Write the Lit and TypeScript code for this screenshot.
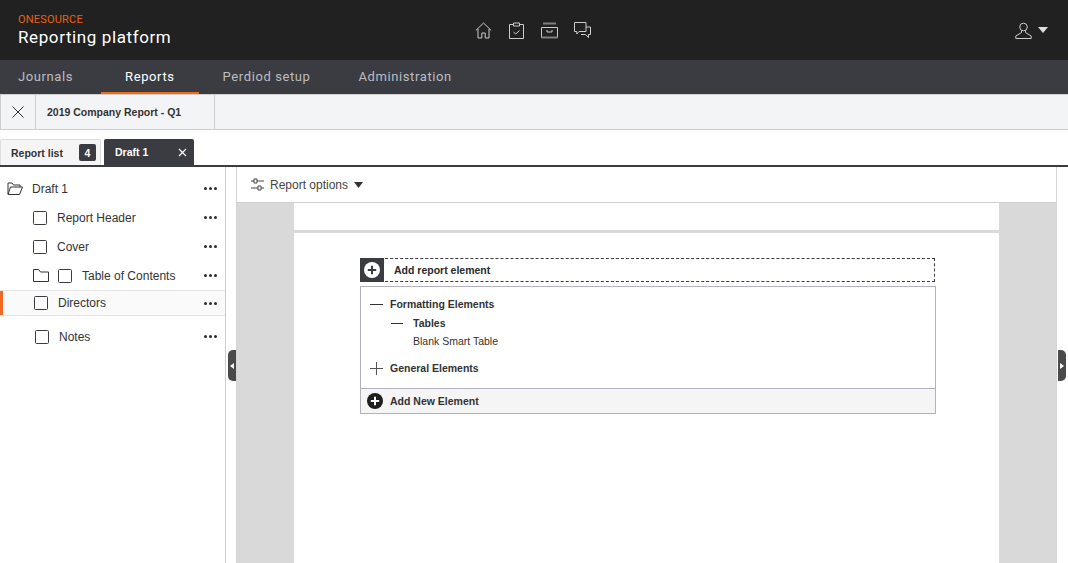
import { LitElement, html, css, svg } from 'lit';
import { customElement } from 'lit/decorators.js';

const box = html`<svg class="check" width="14" height="14" viewBox="0 0 14 14"><rect x=".5" y=".5" width="13" height="13" rx="1" fill="none" stroke="#3a3c42"/></svg>`;
const dots = html`<span class="dots"><i></i><i></i><i></i></span>`;
const plusDisc = (size: number, disc: string, mark: string) => html`
  <svg width=${size} height=${size} viewBox="0 0 16 16">
    <circle cx="8" cy="8" r="8" fill=${disc} />
    ${svg`<path d="M8 3.8v8.4M3.8 8h8.4" stroke=${mark} stroke-width="2" />`}
  </svg>`;

@customElement('app-root')
export class AppRoot extends LitElement {
  static styles = css`
    :host {
      display: block;
      height: 100vh;
      overflow: hidden;
      font-family: 'Liberation Sans', Arial, sans-serif;
      color: #333;
      background: #fff;
    }

    .shell {
      display: flex;
      flex-direction: column;
      height: 100%;
    }

    .top {
      height: 60px;
      flex: none;
      display: grid;
      grid-template-columns: 1fr auto 1fr;
      align-items: center;
      padding: 0 20px 0 18px;
      background: #212121;
      font-family: Roboto, sans-serif;
    }

    .brand {
      display: flex;
      flex-direction: column;
    }

    .brand small {
      font-size: 11px;
      line-height: 14px;
      color: #e8620f;
      letter-spacing: 0.2px;
    }

    .brand strong {
      font-size: 17px;
      line-height: 20px;
      font-weight: 400;
      color: #fff;
      letter-spacing: 0.6px;
    }

    .icons {
      display: flex;
      gap: 16px;
      padding-top: 0;
    }

    .user {
      justify-self: end;
      display: flex;
      align-items: center;
      gap: 6px;
    }

    .nav {
      height: 34px;
      flex: none;
      display: flex;
      background: #3a3c42;
      padding-left: 18px;
      font-family: Roboto, sans-serif;
      font-size: 13px;
      letter-spacing: 0.6px;
      color: #bcbdc0;
    }

    .nav a {
      display: flex;
      align-items: center;
      padding: 0 24px;
      height: 34px;
      box-sizing: border-box;
      border-bottom: 2px solid transparent;
    }

    .nav a:first-child {
      padding: 0 28px 0 0;
    }

    .nav a.on {
      color: #fff;
      border-bottom-color: #f26a12;
    }

    .crumb {
      height: 36px;
      flex: none;
      box-sizing: border-box;
      margin-top: 0;
      display: flex;
      align-items: stretch;
      background: #f3f4f6;
      border: 1px solid #cfcfcf;
      border-right: 0;
    }

    .crumb .close {
      width: 34px;
      display: flex;
      align-items: center;
      justify-content: center;
      border-right: 1px solid #cfcfcf;
    }

    .crumb .title {
      width: 179px;
      padding-left: 11px;
      box-sizing: border-box;
      display: flex;
      align-items: center;
      border-right: 1px solid #cfcfcf;
      font-size: 10.5px;
      font-weight: 700;
      color: #333;
    }

    .tabs {
      flex: none;
      height: 37px;
      box-sizing: border-box;
      padding-top: 9px;
      display: flex;
      gap: 3px;
      border-bottom: 2px solid #3a3c42;
      font-size: 10.5px;
      font-weight: 700;
    }

    .tab {
      height: 26px;
      display: flex;
      align-items: center;
      justify-content: space-between;
      box-sizing: border-box;
      border-radius: 2px 2px 0 0;
    }

    .tab.list {
      width: 101px;
      padding: 0 4px 0 10px;
      background: #f5f5f5;
      border: 1px solid #ddd;
      border-bottom: 0;
    }

    .tab.draft {
      width: 90px;
      padding: 0 7px 0 11px;
      background: #3a3c42;
      color: #fff;
    }

    .badge {
      width: 17px;
      height: 17px;
      border-radius: 2px;
      background: #3a3c42;
      color: #fff;
      display: flex;
      align-items: center;
      justify-content: center;
    }

    .body {
      flex: 1;
      min-height: 0;
      display: flex;
    }

    .side {
      width: 226px;
      flex: none;
      box-sizing: border-box;
      border-right: 1px solid #cfcfcf;
      padding-top: 7px;
      font-size: 12px;
      color: #333;
      position: relative;
    }

    .row {
      height: 29px;
      display: flex;
      align-items: center;
      padding-right: 8px;
      box-sizing: border-box;
    }

    .row .check {
      flex: none;
      margin-right: 10px;
    }

    .row .grow {
      flex: 1;
    }

    .row.root {
      padding-left: 7px;
    }

    .row.root svg {
      margin-right: 9px;
    }

    .row.item {
      padding-left: 33px;
    }

    .row.toc svg.folder {
      margin-right: 9px;
    }

    .row.toc .check {
      margin-right: 10px;
    }

    .row.sel {
      height: 26px;
      padding-left: 34px;
      background: #fafafa;
      border-top: 1px solid #e4e4e4;
      border-bottom: 1px solid #e4e4e4;
      box-shadow: inset 3px 0 0 #f26a21;
    }

    .row.notes {
      height: 29px;
      padding-left: 35px;
      margin-top: 6px;
    }

    .dots {
      display: flex;
      gap: 2px;
    }

    .dots i {
      width: 3px;
      height: 3px;
      border-radius: 50%;
      background: #2b2b2b;
    }

    .work {
      flex: 1;
      min-width: 0;
      margin: 0 11px 0 10px;
      display: flex;
      flex-direction: column;
      border-left: 1px solid #d4d4d4;
      border-right: 1px solid #d4d4d4;
      position: relative;
    }

    .tools {
      height: 36px;
      flex: none;
      box-sizing: border-box;
      display: flex;
      align-items: center;
      gap: 6px;
      padding-left: 14px;
      border-bottom: 1px solid #cfcfcf;
      font-size: 12px;
      color: #444;
    }

    .canvas {
      flex: 1;
      background: #d9d9d9;
      padding: 0 57px;
      display: flex;
    }

    .page {
      flex: 1;
      background: #fff;
    }

    .page-head {
      height: 27px;
      border-bottom: 3px solid #d9d9d9;
    }

    .page-body {
      padding: 25px 64px 0 66px;
    }

    .add {
      height: 24px;
      box-sizing: border-box;
      display: flex;
      align-items: center;
      border: 1px dashed #3a3c42;
      border-left: 0;
      font-size: 10.5px;
      font-weight: 700;
      color: #2b2b2b;
    }

    .add .plus {
      width: 24px;
      height: 24px;
      margin: -1px 10px -1px 0;
      background: #3a3c42;
      display: flex;
      align-items: center;
      justify-content: center;
    }

    .panel {
      margin-top: 4px;
      margin-right: -1px;
      height: 128px;
      box-sizing: border-box;
      border: 1px solid #b3b1bd;
      font-size: 10.5px;
      color: #333;
      display: flex;
      flex-direction: column;
    }

    .tree {
      flex: 1;
      padding-top: 8px;
    }

    .line {
      display: flex;
      align-items: center;
      font-weight: 700;
      height: 18px;
    }

    .line svg {
      margin: 0 7px 0 9px;
      flex: none;
    }

    .line.sub svg {
      margin: 0 10px 0 30px;
    }

    .line.sub {
      margin-top: 1px;
    }

    .line.leaf {
      font-weight: 400;
      padding-left: 52px;
    }

    .line.general {
      margin-top: 9px;
    }

    .foot {
      height: 25px;
      flex: none;
      box-sizing: border-box;
      display: flex;
      align-items: center;
      gap: 7px;
      padding-left: 6px;
      background: #f5f5f5;
      border-top: 1px solid #b3b1bd;
      font-weight: 700;
    }

    .grip {
      position: absolute;
      top: 183px;
      width: 8px;
      height: 31px;
      background: #4a4a4a;
      display: flex;
      align-items: center;
      justify-content: center;
    }

    .grip.left {
      left: -9px;
      border-radius: 5px 0 0 5px;
    }

    .grip.right {
      right: -10px;
      border-radius: 0 5px 5px 0;
    }
  `;

  render() {
    return html`
      <div class="shell">
        <header class="top">
          <div class="brand">
            <small>ONESOURCE</small>
            <strong>Reporting platform</strong>
          </div>
          <div class="icons">
            <svg width="17" height="17" viewBox="0 0 17 17" fill="none" stroke="#ccc">
              <path d="M.8 8.5 8.5 1l7.7 7.5M3 7v9h3.8v-5h3.4v5H14V7" />
            </svg>
            <svg width="17" height="17" viewBox="0 0 17 17" fill="none" stroke="#ccc">
              <path d="M5 2.5H1.5v14h14v-14H12M5.5 1h6v3h-6zM5.5 10l2.3 2 3.7-3.5" />
            </svg>
            <svg width="17" height="17" viewBox="0 0 17 17" fill="none" stroke="#ccc">
              <path d="M2 1.5h13" stroke="#808080" stroke-width="2" />
              <path d="M.5 5.5h16v10H.5zM6 8v2h5V8" />
              <path d="M.5 15.5h16" stroke="#808080" stroke-width="2" />
            </svg>
            <svg width="17" height="17" viewBox="0 0 17 17" fill="none" stroke="#ccc">
              <path d="M.5.5h11.5v9H5L2.8 12V9.500H.5zM12 5h4.500v7.500h-2v3l-3-3H7" />
            </svg>
          </div>
          <div class="user">
            <svg width="17" height="17" viewBox="0 0 17 17" fill="none" stroke="#ccc">
              <circle cx="8.500" cy="5" r="3.800" />
              <path d="M6.500 8.500v2L.8 14v2.500h15.400V14l-5.700-3.500v-2" />
            </svg>
            <svg width="10" height="6" viewBox="0 0 10 6"><path d="M0 0h10L5 6z" fill="#ddd" /></svg>
          </div>
        </header>

        <nav class="nav">
          <a>Journals</a>
          <a class="on">Reports</a>
          <a>Perdiod setup</a>
          <a>Administration</a>
        </nav>

        <div class="crumb">
          <div class="close">
            <svg width="12" height="12" viewBox="0 0 12 12"><path d="M.5.5l11 11M11.500.5l-11 11" stroke="#333" /></svg>
          </div>
          <div class="title">2019 Company Report - Q1</div>
        </div>

        <div class="tabs">
          <div class="tab list">Report list <span class="badge">4</span></div>
          <div class="tab draft">
            Draft 1
            <svg width="9" height="9" viewBox="0 0 9 9"><path d="M1 1l7 7M8 1 1 8" stroke="#fff" stroke-width="1.200" /></svg>
          </div>
        </div>

        <div class="body">
          <aside class="side">
            <div class="row root">
              <svg width="16" height="14" viewBox="0 0 16 14" fill="none" stroke="#333">
                <path d="M1 12V1h4l1.500 2H13v2M1 12.500h11.500L15.500 5H3.500z" />
              </svg>
              <span class="grow">Draft 1</span>${dots}
            </div>
            <div class="row item">${box}<span class="grow">Report Header</span>${dots}</div>
            <div class="row item">${box}<span class="grow">Cover</span>${dots}</div>
            <div class="row item toc">
              <svg class="folder" width="16" height="13" viewBox="0 0 16 13" fill="none" stroke="#333">
                <path d="M.5 12.500V.5h5l2 2.500h8v9.500z" />
              </svg>
              ${box}<span class="grow">Table of Contents</span>${dots}
            </div>
            <div class="row sel">${box}<span class="grow">Directors</span>${dots}</div>
            <div class="row notes">${box}<span class="grow">Notes</span>${dots}</div>
          </aside>

          <main class="work">
            <span class="grip left">
              <svg width="4" height="6" viewBox="0 0 4 6"><path d="M4 0v6L0 3z" fill="#fff" /></svg>
            </span>
            <span class="grip right">
              <svg width="4" height="6" viewBox="0 0 4 6"><path d="M0 0v6l4-3z" fill="#fff" /></svg>
            </span>
            <div class="tools">
              <svg width="13" height="13" viewBox="0 0 13 13" fill="none" stroke="#444">
                <path d="M0 3h3M6 3h7M3 1h3v4H3zM0 10h7M10 10h3M7 8h3v4H7z" />
              </svg>
              <span>Report options</span>
              <svg width="9" height="6" viewBox="0 0 9 6"><path d="M0 0h9L4.500 6z" fill="#333" /></svg>
            </div>
            <div class="canvas">
              <div class="page">
                <div class="page-head"></div>
                <div class="page-body">
                  <div class="add">
                    <span class="plus">${plusDisc(16, '#fff', '#3a3c42')}</span>
                    Add report element
                  </div>
                  <div class="panel">
                    <div class="tree">
                      <div class="line">
                        <svg width="13" height="13" viewBox="0 0 13 13"><path d="M0 6.500h13" stroke="#333" /></svg>
                        Formatting Elements
                      </div>
                      <div class="line sub">
                        <svg width="12" height="13" viewBox="0 0 12 13"><path d="M0 6.500h12" stroke="#333" /></svg>
                        Tables
                      </div>
                      <div class="line leaf">Blank Smart Table</div>
                      <div class="line general">
                        <svg width="13" height="13" viewBox="0 0 13 13"><path d="M0 6.500h13M6.500 0v13" stroke="#555" /></svg>
                        General Elements
                      </div>
                    </div>
                    <div class="foot">${plusDisc(16, '#1f1f1f', '#fff')} Add New Element</div>
                  </div>
                </div>
              </div>
            </div>
          </main>
        </div>
      </div>
    `;
  }
}

declare global {
  interface HTMLElementTagNameMap {
    'app-root': AppRoot;
  }
}
